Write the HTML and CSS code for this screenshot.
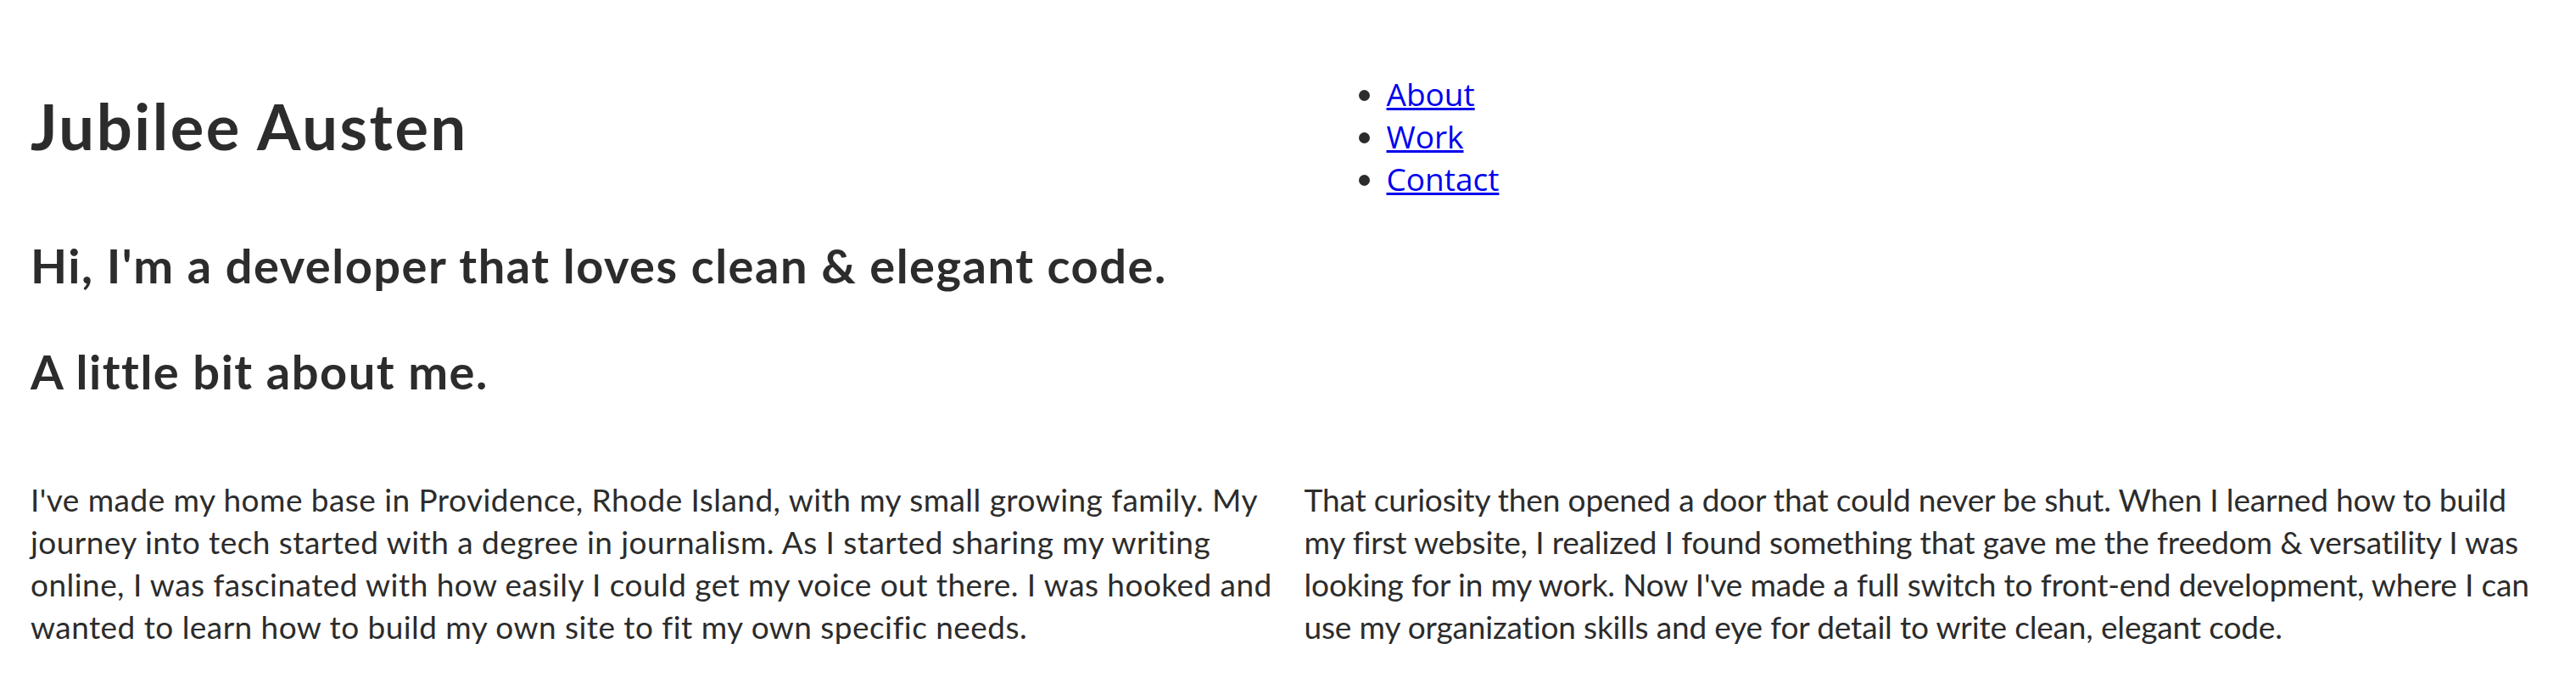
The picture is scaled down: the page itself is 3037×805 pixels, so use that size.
FILE: index.html
```html
<!DOCTYPE html>
<html lang="en">
<head>
<meta charset="utf-8">
<title>Jubilee Austen</title>
<link rel="stylesheet" href="styles.css">
</head>
<body>
<header class="site-header">
  <h1 class="site-title">Jubilee Austen</h1>
  <nav class="site-nav">
    <ul class="nav-list">
      <li><a href="#about">About</a></li>
      <li><a href="#work">Work</a></li>
      <li><a href="#contact">Contact</a></li>
    </ul>
  </nav>
</header>
<main class="content">
  <h2 class="tagline">Hi, I'm a developer that loves clean &amp; elegant code.</h2>
  <section class="about" id="about">
    <h3 class="section-title">A little bit about me.</h3>
    <div class="about-cols">
      <p class="about-text">I've made my home base in Providence, Rhode Island, with my small growing family. My<br>journey into tech started with a degree in journalism. As I started sharing my writing<br>online, I was fascinated with how easily I could get my voice out there. I was hooked and<br>wanted to learn how to build my own site to fit my own specific needs.</p>
      <p class="about-text about-text--tight">That curiosity then opened a door that could never be shut. When I learned how to build<br>my first website, I realized I found something that gave me the freedom &amp; versatility I was<br>looking for in my work. Now I've made a full switch to front-end development, where I can<br>use my organization skills and eye for detail to write clean, elegant code.</p>
    </div>
  </section>
</main>
</body>
</html>
```

FILE: styles.css
```css
html, body {
  margin: 0;
  padding: 0;
  background: #ffffff;
}

body {
  font-family: Lato, "Open Sans", sans-serif;
  font-size: 37px;
  line-height: 50px;
  letter-spacing: 0.45px;
  color: #2c2c2c;
}

.site-header {
  display: grid;
  grid-template-columns: minmax(0, 1fr) minmax(0, 1fr);
  align-items: start;
  column-gap: 6px;
  padding: 0 4px 0 36px;
}

.site-title {
  margin: 104px 0 0 0;
  font-size: 74px;
  line-height: 90px;
  letter-spacing: 2.6px;
  font-weight: 700;
}

.site-nav {
  padding-top: 86px;
}

.nav-list {
  margin: 0;
  padding: 0 0 0 97px;
  font-family: "Open Sans", sans-serif;
  font-size: 37px;
  line-height: 50px;
  letter-spacing: 0;
}

.nav-list a {
  color: #0000ee;
}

.content {
  padding: 0 4px 0 36px;
}

.tagline {
  margin: 41px 0 0 0;
  font-size: 56px;
  line-height: 72px;
  letter-spacing: 1.5px;
  font-weight: 700;
}

.section-title {
  margin: 0;
  padding-top: 53px;
  font-size: 56px;
  line-height: 72px;
  letter-spacing: 1.5px;
  font-weight: 700;
}

.about-cols {
  display: grid;
  grid-template-columns: minmax(0, 1fr) minmax(0, 1fr);
  column-gap: 6px;
  padding-top: 90px;
}

.about-text {
  margin: 0;
  white-space: nowrap;
}

.about-text--tight {
  letter-spacing: -0.15px;
}
```
